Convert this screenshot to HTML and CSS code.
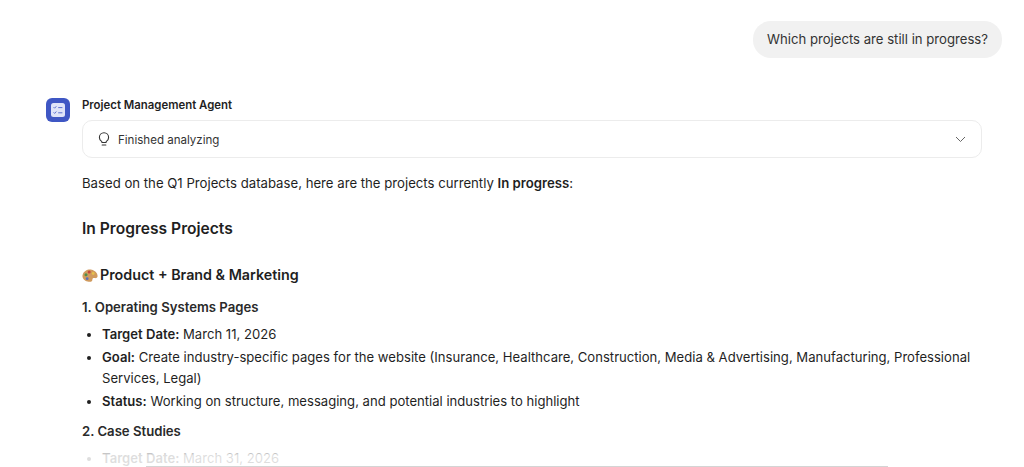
FILE: index.html
```html
<!DOCTYPE html>
<html lang="en">
<head>
    <meta charset="UTF-8">
    <title>Project Management Agent</title>
    <link rel="stylesheet" href="styles.css">
</head>
<body>
    <div class="chat">
        <div class="user-row">
            <div class="bubble">Which projects are still in progress?</div>
        </div>
        <div class="agent-row">
            <div class="avatar">
                <svg width="14" height="14" viewBox="0 0 14 14">
                    <rect width="14" height="14" rx="2.5" fill="#dfe4f8"/>
                    <path d="M2.6 4.2l1 1 1.7-1.9M2.6 9.4l1 1 1.7-1.9" fill="none" stroke="#5a6fcf" stroke-width="1"/>
                    <path d="M7.2 4.6h4.2M7.2 9.8h4.2" fill="none" stroke="#5a6fcf" stroke-width="1"/>
                </svg>
            </div>
            <div class="agent-body">
                <div class="agent-name">Project Management Agent</div>
                <div class="thinking">
                    <div class="thinking-label">
                        <svg width="14" height="16" viewBox="0 0 14 16">
                            <path d="M4.6 10.4C3.4 9.5 2.4 8.3 2.4 6.4a4.6 4.6 0 0 1 9.2 0c0 1.9-1 3.1-2.2 4-.3.3-.4.7-.4 1.1H5c0-.4-.1-.8-.4-1.1z" fill="none" stroke="#333" stroke-width="1.1"/>
                            <path d="M5.2 14h3.6" fill="none" stroke="#333" stroke-width="1.2" stroke-linecap="round"/>
                        </svg>
                        <span>Finished analyzing</span>
                    </div>
                    <svg width="11" height="7" viewBox="0 0 11 7">
                        <path d="M1 1l4.500 4.500L10 1" fill="none" stroke="#666" stroke-width="1"/>
                    </svg>
                </div>
                <p class="intro">Based on the Q1 Projects database, here are the projects currently <b>In progress</b>:</p>
                <h2>In Progress Projects</h2>
                <h3>
                    <svg width="16" height="15" viewBox="0 0 16 14">
                        <path d="M.6 6.500C1.600 2.200 6 .4 9.700 1.200c3.300.8 6 3.300 5.900 6.400 0 1.700-1.400 2.400-2.800 2-1.500-.4-2.500.2-2.400 1.500.1 1.600-1.300 2.600-3.700 2.100C3.300 12.700-.3 10.200.6 6.500z" fill="#d09a5e"/>
                        <circle cx="4" cy="6.300" r="1.500" fill="#4f8f4a"/>
                        <circle cx="7.200" cy="3.600" r="1.500" fill="#c4473a"/>
                        <circle cx="11.200" cy="5" r="1.400" fill="#e6c14b"/>
                        <circle cx="5.200" cy="10.200" r="1.400" fill="#5b6fb8"/>
                    </svg>
                    Product + Brand &amp; Marketing
                </h3>
                <h4>1. Operating Systems Pages</h4>
                <ul>
                    <li><b>Target Date:</b> March 11, 2026</li>
                    <li><b>Goal:</b> Create industry-specific pages for the website (Insurance, Healthcare, Construction, Media &amp; Advertising, Manufacturing, Professional Services, Legal)</li>
                    <li><b>Status:</b> Working on structure, messaging, and potential industries to highlight</li>
                </ul>
                <h4 class="next">2. Case Studies</h4>
                <ul>
                    <li><b>Target Date:</b> March 31, 2026</li>
                </ul>
            </div>
        </div>
    </div>
    <div class="fade"></div>
    <div class="composer"></div>
</body>
</html>
```

FILE: styles.css
```css
html, body {
    height: 100%;
}
body {
    font-family: Inter, "Liberation Sans", sans-serif;
    margin: 0;
    padding: 0;
    background: #fff;
    color: #1f1f1f;
    overflow: hidden;
    position: relative;
}
.chat {
    padding: 21px 22px 0 46px;
}
.user-row {
    display: flex;
    justify-content: flex-end;
}
.bubble {
    background: #f1f1f1;
    border-radius: 18px;
    padding: 0 14px;
    height: 37px;
    line-height: 37px;
    font-size: 13.150px;
    color: #333;
}
.agent-row {
    display: flex;
    gap: 12px;
    margin-top: 40px;
    padding-right: 20px;
}
.avatar {
    width: 24px;
    height: 24px;
    flex: none;
    border-radius: 6px;
    background: #3f57c4;
    display: flex;
    align-items: center;
    justify-content: center;
}
.agent-body {
    flex: 1;
    min-width: 0;
}
.agent-name {
    font-size: 11.400px;
    font-weight: 600;
    line-height: 14px;
}
.thinking {
    margin-top: 8px;
    height: 36px;
    border: 1px solid #ececec;
    border-radius: 10px;
    display: flex;
    align-items: center;
    justify-content: space-between;
    padding: 0 15px 0 14px;
}
.thinking-label {
    display: flex;
    align-items: center;
    gap: 7px;
    font-size: 11.550px;
    line-height: 16px;
    color: #333;
}
.thinking-label span {
    padding-top: 1px;
}
.intro {
    font-size: 13.180px;
    line-height: 20px;
    margin: 15px 0 0;
}
.intro b, li b {
    font-weight: 600;
}
h2 {
    font-size: 15.600px;
    font-weight: 600;
    line-height: 22px;
    margin: 25px 0 0;
}
h3 {
    font-size: 14.300px;
    font-weight: 600;
    line-height: 20px;
    margin: 25px 0 0;
    display: flex;
    align-items: center;
    gap: 2px;
}
h4 {
    font-size: 13.150px;
    font-weight: 600;
    line-height: 18px;
    margin: 13px 0 0;
    color: #2a2a2a;
}
h4.next {
    margin-top: 10px;
}
ul {
    margin: 8px 0 0;
    padding: 0 0 0 20px;
}
li {
    font-size: 13.100px;
    line-height: 21px;
    margin-bottom: 2px;
}
.fade {
    position: absolute;
    left: 0;
    right: 0;
    bottom: 0;
    height: 24px;
    background: linear-gradient(to bottom, rgba(255, 255, 255, 0), rgba(255, 255, 255, .85) 50%);
}
.composer {
    position: absolute;
    left: 146px;
    bottom: 0;
    width: 742px;
    height: 1px;
    background: #d4d4d4;
}
```
